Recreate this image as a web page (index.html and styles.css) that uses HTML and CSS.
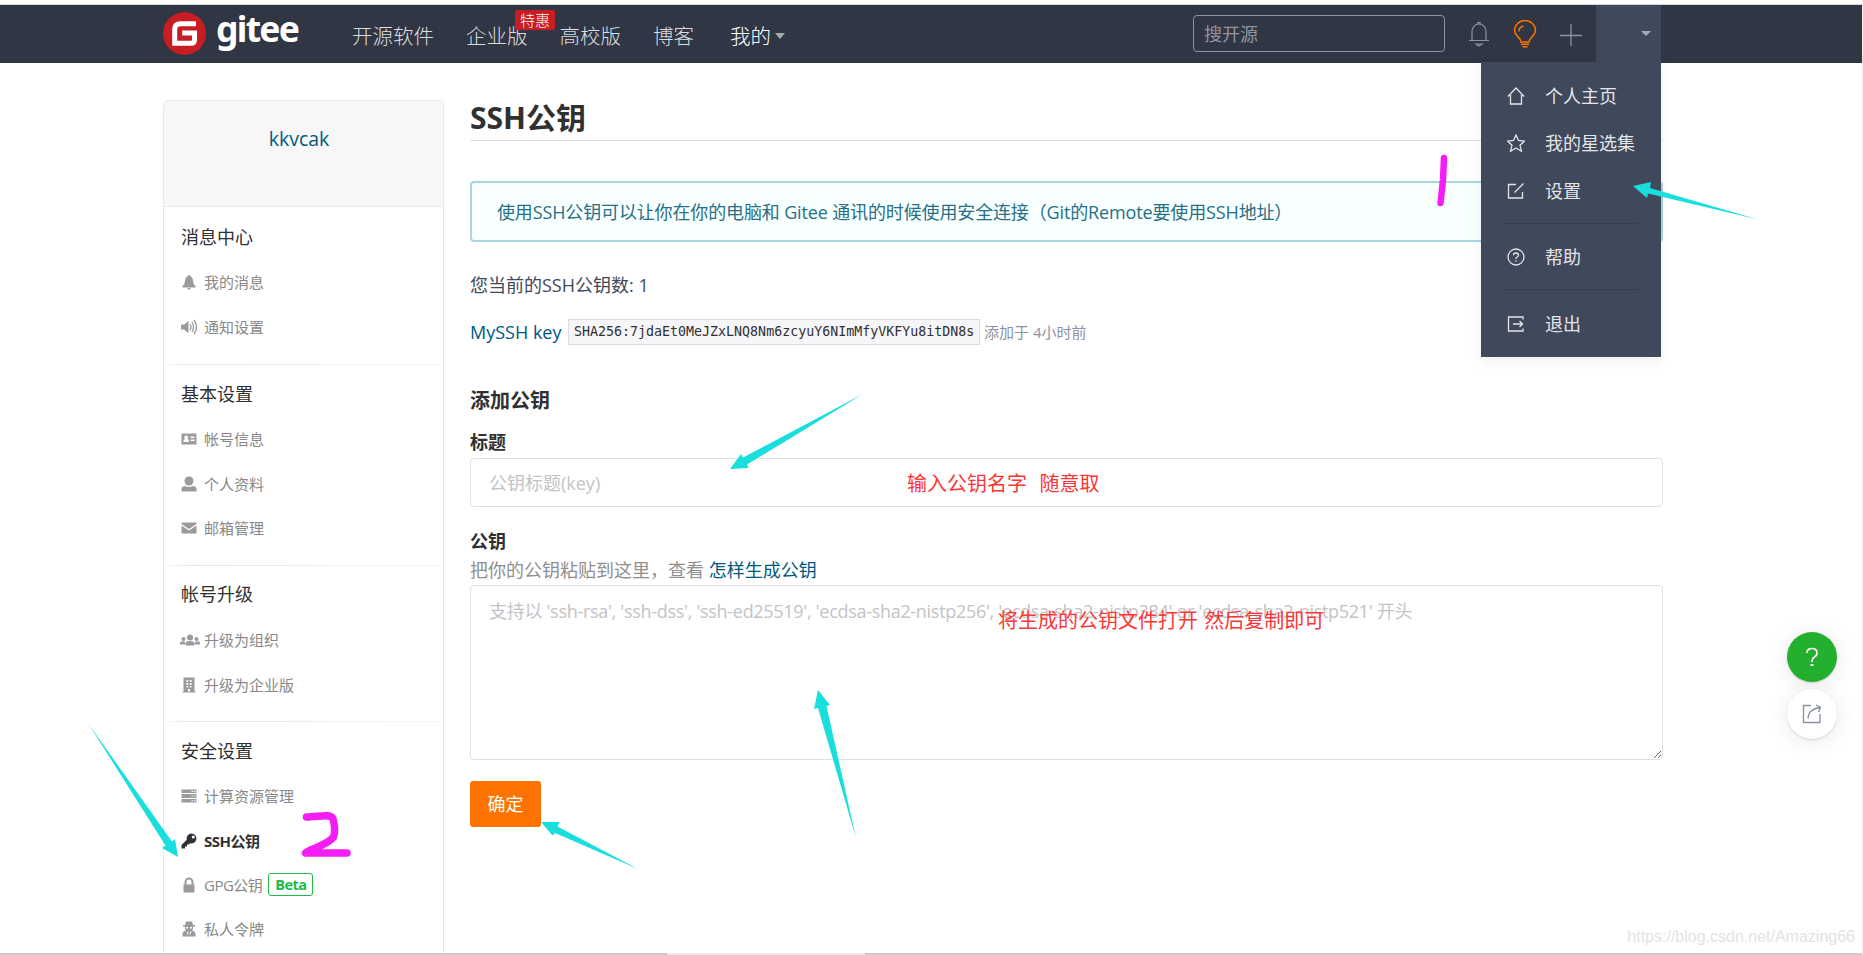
FILE: index.html
```html
<!DOCTYPE html>
<html lang="zh-CN">
<head>
<meta charset="utf-8">
<title>SSH公钥 - Gitee</title>
<link rel="stylesheet" href="styles.css">
</head>
<body>
<div class="page">
  <header class="topbar">
    <div class="container topbar-row">
      <a class="brand">
        <svg class="brand-mark" viewBox="0 0 43 43"><circle cx="21.5" cy="21.5" r="21.5" fill="#c71d23"/><path d="M33 11.8H17.5Q11.7 11.8 11.7 17.6V31.2H28Q31.5 31.2 31.5 27.7V21H19.2" fill="none" stroke="#fff" stroke-width="5"/></svg>
        <span class="brand-name">gitee</span>
      </a>
      <nav class="nav">
        <a class="nav-link">开源软件</a>
        <a class="nav-link nav-enterprise">企业版<span class="nav-badge">特惠</span></a>
        <a class="nav-link nav-school">高校版</a>
        <a class="nav-link nav-blog">博客</a>
        <a class="nav-link nav-mine">我的<i class="caret"></i></a>
      </nav>
      <div class="tools">
        <input class="search" placeholder="搜开源">
        <svg class="tool bell" viewBox="0 0 22 26"><path d="M1 19.500H21M4 19.500V10.500A7 7.500 0 0 1 18 10.500V19.500M9.800 3.500V1.500H12.200V3.500M8 23L11 25L14 23Z" fill="none" stroke="#8c92a4" stroke-width="1.2"/></svg>
        <svg class="tool bulb" viewBox="0 0 24 28"><path d="M8 22C8 17 1.500 16.500 1.500 10.500A10.500 10 0 0 1 22.500 10.500C22.500 16.500 16 17 16 22ZM8 24.300H16M9.500 26.800H14.500M6 11.500A6 5.500 0 0 1 10.500 6" fill="none" stroke="#fe7300" stroke-width="1.500"/></svg>
        <svg class="tool plus" viewBox="0 0 22 22"><path d="M11 0V22M0 11.500H22" fill="none" stroke="#8c92a4" stroke-width="1.300"/></svg>
        <div class="user"><i class="caret small"></i>
          <div class="menu">
            <a class="menu-item"><svg viewBox="0 0 18 18"><path d="M.8 9.500L9 1L17.200 9.500M3.500 8V17H14.500V8" /></svg><span>个人主页</span></a>
            <a class="menu-item"><svg viewBox="0 0 18 18"><path d="M9 1L11.500 6.500L17.500 7L13 11.200L14.500 17.200L9 14L3.500 17.200L5 11.200L.5 7L6.500 6.500Z"/></svg><span>我的星选集</span></a>
            <a class="menu-item"><svg viewBox="0 0 18 18"><path d="M9 2.500H1.500V16H15.500V10M7.500 10.500L16.500 1.500"/></svg><span>设置</span></a>
            <hr class="menu-line">
            <a class="menu-item"><svg viewBox="0 0 18 18"><circle cx="9" cy="9" r="8"/><path d="M6.500 7.300Q6.500 5 9 5T11.500 7.300Q11.500 8.500 9 10V11M9 12.300V13.600"/></svg><span>帮助</span></a>
            <hr class="menu-line">
            <a class="menu-item"><svg viewBox="0 0 18 18"><path d="M16 4.500V2H1.500V16H16V13.500M6 9H15.500M12.500 6L15.500 9L12.500 12"/></svg><span>退出</span></a>
          </div>
        </div>
      </div>
    </div>
  </header>

  <main class="container main">
    <aside class="side">
      <div class="side-user">kkvcak</div>
      <section class="group">
        <h2 class="group-title">消息中心</h2>
        <a class="side-link"><svg viewBox="0 0 16 16"><path d="M7.200 1H8.800V2Q12 3 12 7Q12 10 14.500 12V13.500H1.500V12Q4 10 4 7Q4 3 7.200 2ZM6.300 14H9.700Q9 15.700 8 15.700T6.300 14Z"/></svg>我的消息</a>
        <a class="side-link"><svg viewBox="0 0 16 16"><path d="M0 5.500H3L7.500 2V14L3 10.500H0Z"/><path class="line" d="M9 5Q11 8 9 11M11 3Q14 8 11 13M13 1Q18 8 13 15"/></svg>通知设置</a>
      </section>
      <section class="group">
        <h2 class="group-title">基本设置</h2>
        <a class="side-link"><svg viewBox="0 0 16 16"><path fill-rule="evenodd" d="M.5 2.500H15.500V13.500H.5ZM5 4.500A2 2 0 0 0 4 8L2.500 9V11H8V9L6.500 8A2 2 0 0 0 5 4.500ZM9.500 5.500V7H13.500V5.500ZM9.500 8.500V10H13.500V8.500Z"/></svg>帐号信息</a>
        <a class="side-link"><svg viewBox="0 0 16 16"><circle cx="8" cy="5" r="4.500"/><path d="M.5 15.500V13Q.5 10.500 4 10Q8 12 12 10Q15.500 10.500 15.500 13V15.500Z"/></svg>个人资料</a>
        <a class="side-link"><svg viewBox="0 0 16 16"><path d="M.5 2.500H15.500V4L8 9L.5 4ZM.5 5.500L8 10.500L15.500 5.500V13.500H.5Z"/></svg>邮箱管理</a>
      </section>
      <section class="group">
        <h2 class="group-title">帐号升级</h2>
        <a class="side-link"><svg class="wide" viewBox="0 0 20 16"><circle cx="10" cy="5.500" r="3"/><circle cx="3.500" cy="7" r="2"/><circle cx="16.500" cy="7" r="2"/><path d="M5.500 13.500V11Q6 9 10 9T14.500 11V13.500ZM0 12.500V10.500Q2 8.500 5 10V12.500ZM15 12.500V10Q18 8.500 20 10.500V12.500Z"/></svg>升级为组织</a>
        <a class="side-link"><svg viewBox="0 0 16 16"><path fill-rule="evenodd" d="M2.500.5H13.500V14.500H14.500V15.500H1.500V14.500H2.500ZM5.500 3V5H7.200V3ZM8.800 3V5H10.500V3ZM5.500 6V8H7.200V6ZM8.800 6V8H10.500V6ZM5.500 9V10.500H7.200V9ZM8.800 9V10.500H10.500V9ZM7 12V14.500H9V12Z"/></svg>升级为企业版</a>
      </section>
      <section class="group">
        <h2 class="group-title">安全设置</h2>
        <a class="side-link"><svg viewBox="0 0 16 16"><path fill-rule="evenodd" d="M.5 1.500H15.500V5H.5ZM.5 6H15.500V10H.5ZM.5 11H15.500V14.500H.5ZM10.500 3V4H12V3ZM13 3V4H14.500V3ZM10.500 7.500V8.500H12V7.500ZM13 7.500V8.500H14.500V7.500ZM10.500 12.200V13.200H12V12.200ZM13 12.200V13.200H14.500V12.200Z"/></svg>计算资源管理</a>
        <a class="side-link current"><svg viewBox="0 0 16 16"><path fill-rule="evenodd" d="M10.500.5A5 5 0 1 1 9 10.300L7.500 11.500H6V13.500H4V15.500H.5V12L5.800 6.800A5 5 0 0 1 10.500.5ZM12.300 2.500A1.500 1.500 0 1 0 12.300 5.500A1.500 1.500 0 1 0 12.300 2.500Z"/></svg>SSH公钥</a>
        <a class="side-link gpg"><svg viewBox="0 0 16 16"><path fill-rule="evenodd" d="M2.500 7.500H3.500V5A4.500 4.500 0 0 1 12.500 5V7.500H13.500V15.500H2.500ZM5.500 7.500H10.500V5A2.500 2.500 0 0 0 5.500 5Z"/></svg>GPG公钥<span class="beta">Beta</span></a>
        <a class="side-link"><svg viewBox="0 0 16 16"><path fill-rule="evenodd" d="M5 .5H11L12 4H14V5.500H12V8L11 9.500Q14.500 10 14.500 13V15.500H1.500V13Q1.500 10 5 9.500L4 8V5.500H2V4H4ZM5 6V7.500H7V6ZM9 6V7.500H11V6ZM5.500 10.500L7.200 14.500V11ZM10.500 10.500L8.800 14.500V11Z"/></svg>私人令牌</a>
      </section>
    </aside>

    <div class="content">
      <h1 class="title">SSH公钥</h1>
      <div class="notice">使用SSH公钥可以让你在你的电脑和 Gitee 通讯的时候使用安全连接（Git的Remote要使用SSH地址）</div>
      <p class="count">您当前的SSH公钥数: 1</p>
      <div class="key-row"><a class="key-name">MySSH key</a><code class="key-code">SHA256:7jdaEt0MeJZxLNQ8Nm6zcyuY6NImMfyVKFYu8itDN8s</code><span class="key-time">添加于 4小时前</span></div>
      <h3 class="form-title">添加公钥</h3>
      <label class="label">标题</label>
      <input class="field" placeholder="公钥标题(key)">
      <label class="label label-key">公钥</label>
      <p class="hint">把你的公钥粘贴到这里，查看 <a class="hint-link">怎样生成公钥</a></p>
      <textarea class="field area" placeholder="支持以 'ssh-rsa', 'ssh-dss', 'ssh-ed25519', 'ecdsa-sha2-nistp256', 'ecdsa-sha2-nistp384' or 'ecdsa-sha2-nistp521' 开头"></textarea>
      <button class="submit">确定</button>
    </div>
  </main>

  <div class="floaters">
    <div class="float help"><svg viewBox="0 0 20 24"><path d="M5 8Q5 3.500 10 3.500T15 8Q15 10.500 12.500 12T10 16V17" fill="none" stroke="#fff" stroke-width="1.700"/><rect x="8.500" y="19" width="3" height="2" fill="#fff"/></svg></div>
    <div class="float"><svg viewBox="0 0 20 20"><path d="M9 1.500H1.500V18.500H18V10M6 14.500Q6.500 5 18 3.500M14 1L18.500 3.300L16.500 8" fill="none" stroke="#8c92a4" stroke-width="1.400"/></svg></div>
  </div>

  <svg class="marks" viewBox="0 0 1863 955">
    <g fill="#18dfdd">
      <path d="M1633 186L1651 182L1650 188L1758 219.500L1648 193.500L1647 198Z"/>
      <path d="M730 469L741 454L743 457.500L863 394L747 464.500L748.500 468Z"/>
      <path d="M818 690L830 705L826.500 706L856 838L818 708L814 709Z"/>
      <path d="M541 822L560 822L557.500 826.500L638 869L555 833L552.500 835.500Z"/>
      <path d="M178 857L175 839L172 841.500L88.500 724L165.500 845.500L162 848Z"/>
    </g>
    <g fill="none" stroke="#f41ef4" stroke-linecap="round" stroke-linejoin="round">
      <path stroke-width="6.500" d="M1444 158L1443 180L1440.500 203"/>
      <path stroke-width="7.500" d="M306.500 817C318 817 331 813 333 819Q336 830 333.500 837C327 846 308 849 305.500 853H347"/>
    </g>
  </svg>
  <span class="note note-title">输入公钥名字&nbsp; 随意取</span>
  <span class="note note-key">将生成的公钥文件打开 然后复制即可</span>
  <span class="watermark">https://blog.csdn.net/Amazing66</span>
  <div class="scrollbar"><i></i></div>
</div>
</body>
</html>
```

FILE: styles.css
```css
* { box-sizing: border-box; }
body { margin: 0; background: #fff; color: #303030; font: 18px/26px "Open Sans", "Noto Sans CJK SC", sans-serif; overflow: hidden; }
h1, h2, h3, p { margin: 0; }
input, textarea, button { font: inherit; }
.page { position: relative; width: 1863px; height: 955px; padding-top: 4px; overflow: hidden; border-right: 1px solid #eee; }
.container { width: 1498px; margin-left: 163px; }

.topbar { height: 59px; background: #303643; border-top: 1px solid #d4d6d8; }
.topbar-row { display: flex; height: 57px; align-items: center; }
.brand { display: flex; flex: none; gap: 10px; width: 189px; height: 43px; }
.brand-mark { width: 43px; height: 43px; }
.brand-name { color: #fff; font: bold 35.500px/32px "Noto Sans", sans-serif; letter-spacing: -1.700px; }
.nav { display: flex; flex: none; width: 841px; padding-top: 4px; color: #dcdde0; font-size: 20.500px; font-weight: 300; line-height: 30px; }
.nav-link { white-space: nowrap; }
.nav-enterprise { position: relative; margin-left: 32px; }
.nav-school { margin-left: 32px; }
.nav-blog { margin-left: 32px; }
.nav-mine { display: flex; align-items: center; gap: 4px; margin-left: 36px; color: #fff; }
.nav-badge { position: absolute; left: 49px; top: -11px; width: 40px; height: 20px; border-radius: 2px; background: #c71d23; color: #fff; font-size: 15px; line-height: 20px; text-align: center; }
.caret { border: 5.500px solid transparent; border-top: 6px solid #a6a9b0; border-bottom: 0; }
.caret.small { border-width: 5px 5px 0; }
.tools { display: flex; flex: none; align-items: center; height: 57px; }
.search { width: 252px; height: 37px; padding: 0 10px; border: 1px solid #8c92a4; border-radius: 4px; background: transparent; font-size: 18px; }
.search::placeholder { color: #9095a0; opacity: 1; }
.bell { width: 22px; height: 26px; margin-left: 23px; }
.bulb { width: 24px; height: 28px; margin-left: 23px; }
.plus { width: 22px; height: 22px; margin: 2px 14px 0 23px; }
.user { position: relative; display: flex; align-items: center; justify-content: flex-end; width: 65px; height: 57px; padding-right: 10px; background: #40485b; }
.menu { position: absolute; right: 0; top: 57px; z-index: 3; width: 180px; height: 295px; padding-top: 10px; background: #40485b; color: #e3e5e8; box-shadow: 0 4px 12px rgba(0, 80, 80, .08); }
.menu-item { display: flex; align-items: center; gap: 20px; height: 47.500px; padding-left: 26px; white-space: nowrap; }
.menu-item svg { width: 18px; height: 18px; fill: none; stroke: #e3e5e8; stroke-width: 1.300; }
.menu-line { width: 135px; height: 1px; margin: 8px 0 10px 23px; border: 0; background: #343f50; }

.main { display: flex; gap: 26px; padding-top: 37px; }
.side { flex: none; width: 281px; height: 853px; border: 1px solid #e6e8ec; border-bottom: 0; border-radius: 5px 5px 0 0; overflow: hidden; }
.side-user { height: 106px; padding: 25px 9px 0 0; background: #f7f7f8; border-bottom: 1px solid #e3e9ed; color: #005980; font-size: 19.500px; text-align: center; }
.group { height: 158px; padding: 17px 0 0 17px; background: linear-gradient(90deg, #fafafa, #e5e5e5 10%, #f0f0f0 60%, #f5f5f5) bottom / 100% 1px no-repeat; }
.group:nth-of-type(2) { height: 201px; padding-top: 16px; }
.group:nth-of-type(3) { height: 156px; padding-top: 15px; }
.group:nth-of-type(4) { height: 240px; padding-top: 16px; background: none; }
.group-title { margin-bottom: 10px; font-size: 18px; font-weight: 400; line-height: 26px; }
.group:nth-of-type(3) .group-title { margin-bottom: 11px; }
.side-link { display: flex; align-items: center; height: 44.400px; color: #888; font-size: 15px; white-space: nowrap; }
.side-link svg { width: 16px; height: 16px; margin-right: 7px; fill: #9b9b9b; }
.side-link svg.wide { width: 20px; margin-left: -1px; margin-right: 4px; }
.side-link .line { fill: none; stroke: #9b9b9b; stroke-width: 1.300; }
.side-link.current { color: #303030; font-weight: 700; letter-spacing: -.500px; }
.side-link.current svg { fill: #303030; }
.side-link.gpg { letter-spacing: -.500px; }
.beta { width: 45px; height: 23px; margin-left: 6px; border: 1px solid #21ba45; border-radius: 3px; color: #21ba45; font-size: 14.500px; font-weight: 700; line-height: 21px; text-align: center; }

.content { display: flex; flex: none; flex-direction: column; align-items: flex-start; width: 1193px; }
.title { width: 100%; height: 41px; border-bottom: 1px solid #ddd; font-size: 30px; font-weight: 700; line-height: 36px; }
.notice { display: flex; align-items: center; width: 100%; height: 61px; margin-top: 40px; padding-left: 25px; border: 2px solid #a9d5de; border-radius: 4px; background: #f8ffff; color: #276f86; letter-spacing: -.140px; white-space: nowrap; }
.count { margin-top: 30px; color: #40485b; }
.key-row { display: flex; align-items: center; height: 26px; margin-top: 21px; white-space: nowrap; }
.key-name { width: 98px; color: #005980; }
.key-code { width: 412px; height: 26px; padding-left: 5px; border: 1px solid #dcdce4; background: #f6f6f9; color: #303030; font: 13.300px/24px "DejaVu Sans Mono", monospace; }
.key-time { margin-left: 4px; color: #8c92a4; font-size: 15px; }
.form-title { margin-top: 43px; font-size: 20px; line-height: 26px; }
.label { margin-top: 15px; font-weight: 700; }
.field { display: block; width: 1193px; height: 49px; margin-top: 3px; padding: 0 18px; border: 1px solid #dfe0e6; border-radius: 4px; background: #fff; outline: 0; }
.field::placeholder { color: #c3c3c5; opacity: 1; }
.label-key { margin-top: 21px; }
.hint { margin-top: 3px; color: #8f8f8f; white-space: nowrap; }
.hint-link { color: #005980; }
.area { height: 175px; margin-top: 2px; padding-top: 12px; letter-spacing: -.300px; }
.submit { width: 71px; height: 46px; margin-top: 21px; padding: 0; border: 0; border-radius: 3px; background: #fe7300; color: #fff; }

.floaters { position: absolute; left: 1787px; top: 632px; display: flex; flex-direction: column; gap: 7px; }
.float { display: grid; place-items: center; width: 50px; height: 50px; border-radius: 50%; background: #fff; box-shadow: 0 1px 2px rgba(0, 0, 0, .14), 0 2px 22px rgba(0, 0, 0, .09); }
.float svg { width: 20px; height: 20px; }
.help { background: #22b02e; }
.help svg { height: 24px; }
.marks { position: absolute; left: 0; top: 0; z-index: 4; width: 1863px; height: 955px; }
.note { position: absolute; z-index: 5; color: #fc3636; font-size: 20px; line-height: 28px; white-space: nowrap; }
.note-title { left: 907px; top: 470px; word-spacing: 1px; }
.note-key { left: 998px; top: 607px; word-spacing: 1px; }
.watermark { position: absolute; right: 7px; top: 924px; color: #e3e3e3; font: 16px/26px "Liberation Sans", sans-serif; }
.scrollbar { position: absolute; left: 0; bottom: 0; width: 100%; height: 2px; padding-left: 667px; background: #ccc; }
.scrollbar i { display: block; width: 198px; height: 2px; background: #e9e9e9; }
```
